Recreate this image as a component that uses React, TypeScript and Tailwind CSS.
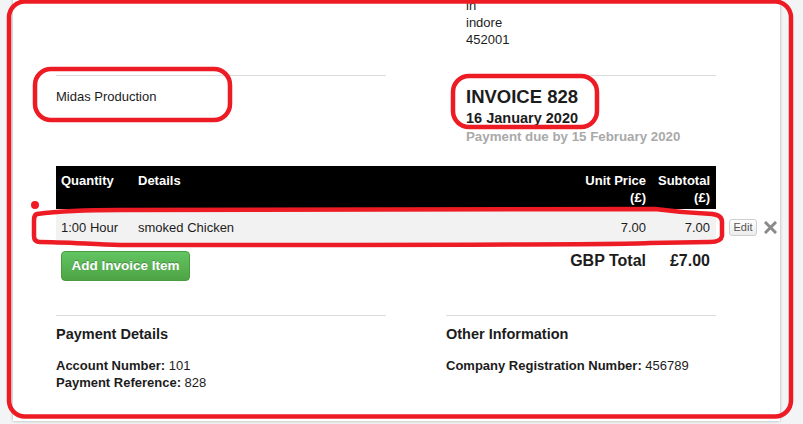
export default function App() {
  return (
    <div className="relative w-[803px] h-[424px] overflow-hidden bg-[#f3f4f5] font-['Liberation_Sans',Arial,sans-serif] text-[#1c1c1c]">
      <div className="ml-[13px] w-[767px] h-full bg-white shadow-[0_0_3px_rgba(0,0,0,0.3)] pl-[43px]">
        {/* Address */}
        <div className="pl-[410px] mt-[-3px] text-[13px] leading-[17px]">
          <div>in</div>
          <div>indore</div>
          <div>452001</div>
        </div>

        {/* Company / invoice */}
        <div className="flex mt-[27px]">
          <div className="w-[330px] border-t border-[#dcdcdc] pt-[12px] text-[13px] leading-[17px]">
            Midas Production
          </div>
          <div className="ml-[80px] w-[250px] border-t border-[#dcdcdc] pt-[10px]">
            <div className="text-[18.5px] leading-[22px] font-bold">INVOICE 828</div>
            <div className="mt-[1px] text-[14.5px] leading-[18px] font-bold">16 January 2020</div>
            <div className="mt-[1px] text-[13.3px] leading-[17px] font-bold text-[#a9a9a9] whitespace-nowrap">
              Payment due by 15 February 2020
            </div>
          </div>
        </div>

        {/* Items */}
        <div className="mt-[21px] w-[660px] grid grid-cols-[77px_447px_72px_64px] bg-black text-white text-[13px] leading-[17px] font-bold pt-[6px] pb-[3px]">
          <div className="pl-[5px]">Quantity</div>
          <div className="pl-[5px]">Details</div>
          <div className="pr-[6px] text-right whitespace-nowrap">Unit Price<br />(£)</div>
          <div className="pr-[6px] text-right">Subtotal<br />(£)</div>
        </div>
        <div className="flex items-center mt-[2px]">
          <div className="w-[660px] h-[33px] grid grid-cols-[77px_447px_72px_64px] items-center bg-[#f2f2f2] text-[13px] leading-[17px]">
            <div className="pl-[5px]">1:00 Hour</div>
            <div className="pl-[5px]">smoked Chicken</div>
            <div className="pr-[6px] text-right">7.00</div>
            <div className="pr-[6px] text-right">7.00</div>
          </div>
          <button className="ml-[13px] h-[17px] w-[28px] rounded-[3px] border border-[#cfcfcf] bg-gradient-to-b from-white to-[#ececec] text-[11px] leading-[15px] text-[#555]">
            Edit
          </button>
          <svg className="ml-[7px]" width="13" height="13" viewBox="0 0 13 13">
            <path d="M2 2 L11 11 M11 2 L2 11" stroke="#8a8a8a" strokeWidth="3" strokeLinecap="square" />
          </svg>
        </div>

        {/* Add / total */}
        <div className="w-[660px] flex items-start mt-[7px]">
          <button className="ml-[5px] w-[129px] h-[30px] rounded-[4px] border border-[#4a9a3f] bg-gradient-to-b from-[#62c462] to-[#4ea445] text-white font-bold text-[13.5px] [text-shadow:0_-1px_0_rgba(0,0,0,0.25)]">
            Add Invoice Item
          </button>
          <div className="flex-1" />
          <div className="pr-[6px] text-right text-[16px] leading-[20px] font-bold whitespace-nowrap">GBP Total</div>
          <div className="w-[64px] pr-[6px] text-right text-[16px] leading-[20px] font-bold">£7.00</div>
        </div>

        {/* Footer */}
        <div className="flex mt-[34px]">
          <div className="w-[330px] border-t border-[#dcdcdc] pt-[9px]">
            <div className="text-[14.5px] leading-[18px] font-bold">Payment Details</div>
            <div className="mt-[14px] text-[13px] leading-[17px]">
              <div><span className="font-bold">Account Number:</span> 101</div>
              <div><span className="font-bold">Payment Reference:</span> 828</div>
            </div>
          </div>
          <div className="ml-[60px] w-[270px] border-t border-[#dcdcdc] pt-[9px]">
            <div className="text-[14.5px] leading-[18px] font-bold">Other Information</div>
            <div className="mt-[14px] text-[13px] leading-[17px]">
              <div><span className="font-bold">Company Registration Number:</span> 456789</div>
            </div>
          </div>
        </div>
      </div>

      {/* red annotations */}
      <svg className="absolute inset-0 pointer-events-none" width="803" height="424" viewBox="0 0 803 424" fill="none">
        <g stroke="#ed1c24" strokeWidth="4.5" strokeLinejoin="round" strokeLinecap="round">
          <rect x="9" y="1.5" width="782" height="415" rx="16" />
          <rect x="35" y="69" width="195" height="51" rx="16" />
          <rect x="453" y="76" width="144" height="51" rx="16" />
          <path d="M37 214 C 60 211, 90 210, 120 210 L 655 209 C 670 211, 690 213, 712 214 Q 722 215 722 222 L 722 236 Q 721 242 710 242 L 650 243 C 630 245, 400 245, 120 245 C 90 244, 60 242, 40 242 Q 34 242 34 236 L 34 220 Q 34 215 37 214 Z" />
        </g>
        <circle cx="35" cy="205" r="4" fill="#ed1c24" />
      </svg>
    </div>
  );
}
